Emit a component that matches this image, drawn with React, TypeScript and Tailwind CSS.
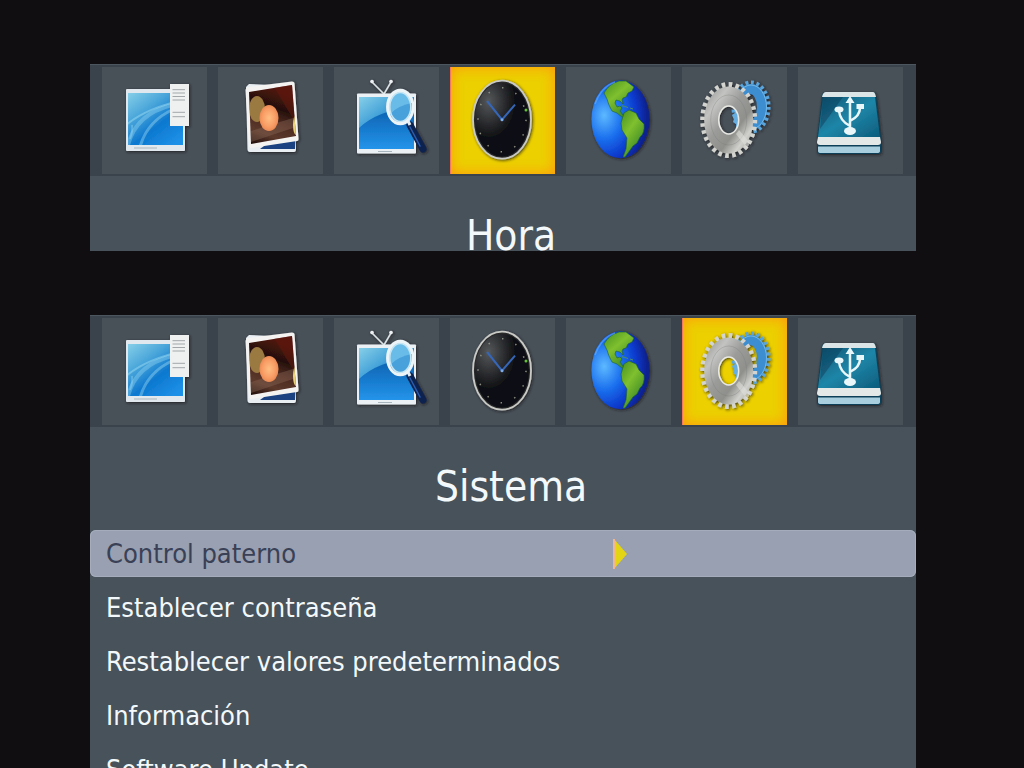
import React from "react";
import clsx from "clsx";

type TabId = "picture" | "photo" | "search" | "time" | "option" | "system" | "usb";

const IconDefs: React.FC = () => (
	<svg className="absolute h-0 w-0" aria-hidden="true">
		<defs>
			<linearGradient id="screen" x1="0" y1="0" x2="0.8" y2="1">
				<stop offset="0" stopColor="#86cfe8" />
				<stop offset="0.35" stopColor="#4aa6da" />
				<stop offset="0.65" stopColor="#0d78cf" />
				<stop offset="1" stopColor="#1d8fe6" />
			</linearGradient>
			<linearGradient id="screenLow" x1="0" y1="0" x2="0" y2="1">
				<stop offset="0" stopColor="#0a5fae" />
				<stop offset="1" stopColor="#2494ea" />
			</linearGradient>
			<linearGradient id="photo" x1="0" y1="1" x2="0.3" y2="0">
				<stop offset="0" stopColor="#1c0a08" />
				<stop offset="0.25" stopColor="#5c392c" />
				<stop offset="0.5" stopColor="#4d2a20" />
				<stop offset="0.72" stopColor="#24100c" />
				<stop offset="1" stopColor="#4f1510" />
			</linearGradient>
			<radialGradient id="glow">
				<stop offset="0" stopColor="#ffbe82" />
				<stop offset="0.7" stopColor="#f89c64" />
				<stop offset="1" stopColor="#e98a55" />
			</radialGradient>
			<radialGradient id="dial" cx="0.25" cy="0.25" r="0.5">
				<stop offset="0" stopColor="#55585a" />
				<stop offset="1" stopColor="#0e0f12" />
			</radialGradient>
			<radialGradient id="sea" cx="0.22" cy="0.45" r="0.75">
				<stop offset="0" stopColor="#5db9ff" />
				<stop offset="0.4" stopColor="#1b70ee" />
				<stop offset="0.75" stopColor="#0b38cb" />
				<stop offset="1" stopColor="#10208a" />
			</radialGradient>
			<linearGradient id="land" x1="0" y1="0" x2="0.7" y2="1">
				<stop offset="0" stopColor="#459024" />
				<stop offset="0.45" stopColor="#7fc02e" />
				<stop offset="1" stopColor="#358226" />
			</linearGradient>
			<linearGradient id="steel" x1="0" y1="0" x2="1" y2="1">
				<stop offset="0" stopColor="#8c8d8c" />
				<stop offset="0.25" stopColor="#c3c4c1" />
				<stop offset="0.45" stopColor="#9b9c99" />
				<stop offset="0.65" stopColor="#8f908c" />
				<stop offset="0.8" stopColor="#d0d0cd" />
				<stop offset="1" stopColor="#969793" />
			</linearGradient>
			<linearGradient id="drive" x1="0" y1="0" x2="1" y2="1">
				<stop offset="0" stopColor="#0f5371" />
				<stop offset="0.5" stopColor="#1f86a8" />
				<stop offset="1" stopColor="#0c5c7c" />
			</linearGradient>
			<filter id="shade" x="-20%" y="-20%" width="140%" height="140%">
				<feDropShadow dx="1" dy="1" stdDeviation="1.5" floodColor="#15181c" floodOpacity="0.8" />
			</filter>
			<clipPath id="screenClip">
				<rect x="26" y="26" width="55" height="52" />
			</clipPath>
			<clipPath id="photoClip">
				<path d="M31 25 74 18 78 69 33 77z" />
			</clipPath>
		</defs>
	</svg>
);

const PictureIcon = () => (
	<g filter="url(#shade)">
		<rect x="24" y="22" width="59" height="62" rx="1" fill="#e2e9ee" />
		<rect x="26" y="26" width="55" height="52" fill="url(#screen)" />
		<g clipPath="url(#screenClip)" fill="none" stroke="#a4e2f6">
			<path d="M24 58Q46 40 86 32" strokeWidth="2" strokeOpacity="0.45" />
			<path d="M26 78Q34 47 70 38" strokeWidth="4" strokeOpacity="0.35" />
			<path d="M38 80Q45 54 72 42" strokeWidth="3" strokeOpacity="0.4" />
			<path d="M28 72Q31 64 30 58" strokeWidth="2" strokeOpacity="0.35" />
		</g>
		<path d="M32 81H55" stroke="#a9b5bd" strokeWidth="1" />
		<rect x="68" y="17" width="19" height="42" fill="#eff1f1" />
		<path d="M70.500 22.700H83M70.500 26H83M70.500 29.500H83M70.500 33H83M70.500 45.300H83M70.500 49.700H83" stroke="#a3a7a9" strokeWidth="1" />
	</g>
);

const PhotoIcon = () => (
	<g filter="url(#shade)">
		<path d="M31 17 74 19 78 82Q78 85 76 85L32 85Q29.500 85 29.500 82L28 20z" fill="#e8eef2" />
		<path d="M50 76 77 71 77 82 42 82z" fill="#1b4381" />
		<path d="M30 20 74 14.500Q76 14.500 76.500 16L80.500 72Q80.500 74 79 74L33 81Q31 81 31 79L27.500 23Q27.500 21 30 20z" fill="#f5f3f1" />
		<path d="M31 25 74 18 78 69 33 77z" fill="url(#photo)" />
		<g clipPath="url(#photoClip)">
			<path d="M55 18 76 15 80 60z" fill="#641a12" opacity="0.55" />
			<path d="M33 64 78 50 78 60 33 75z" fill="#8a6a58" opacity="0.4" />
			<ellipse cx="39" cy="42" rx="8" ry="13" fill="#9b7a42" />
			<ellipse cx="51" cy="51" rx="9.500" ry="13" fill="url(#glow)" />
			<ellipse cx="78" cy="58" rx="3" ry="10" fill="#ead47a" />
		</g>
	</g>
);

const SearchIcon = () => (
	<g filter="url(#shade)">
		<path d="M38 15 50 27 57 15" fill="none" stroke="#dde4e8" strokeWidth="1.500" />
		<circle cx="38" cy="14.500" r="1.800" fill="#eef1f3" />
		<circle cx="57" cy="14.500" r="1.800" fill="#eef1f3" />
		<rect x="23" y="26.500" width="59" height="60" rx="1" fill="#eaf0f4" />
		<rect x="25" y="30" width="55" height="52" fill="url(#screen)" />
		<path d="M25 61Q44 43 80 40V82H25z" fill="url(#screenLow)" />
		<path d="M44 84.500H58" stroke="#a9b5bd" strokeWidth="1" />
		<path d="M76 58 89 82" stroke="#0c2350" strokeWidth="7" strokeLinecap="round" />
		<path d="M76 60 86 79" stroke="#2d5cae" strokeWidth="1.500" strokeLinecap="round" />
		<path d="M73 52 76 58" stroke="#e5edf2" strokeWidth="3" />
		<ellipse cx="66.300" cy="40" rx="12.500" ry="16.500" fill="#6bbce8" stroke="#edf4f8" strokeWidth="3.500" />
		<path d="M56 47Q65 38 78 36 78 53 66 55 58 54 56 47z" fill="#3a95d5" opacity="0.7" />
		<ellipse cx="66.300" cy="40" rx="10.500" ry="14.500" fill="none" stroke="#c6e6f4" strokeWidth="1.500" />
	</g>
);

const TimeIcon = () => (
	<g filter="url(#shade)">
		<ellipse cx="52" cy="52.700" rx="29" ry="39" fill="#2a2b2c" stroke="#c9cac6" strokeWidth="1.800" />
		<ellipse cx="52" cy="52.700" rx="27" ry="37" fill="url(#dial)" />
		<ellipse cx="52" cy="52.700" rx="24" ry="32" fill="none" stroke="#8a8c82" strokeWidth="1.500" pathLength="120" strokeDasharray="1 9" />
		<circle cx="76" cy="43" r="1.500" fill="#63c03c" />
		<path d="M37 34 52 52.700 65 37.700" fill="none" stroke="#3566b8" strokeWidth="2" />
		<circle cx="52" cy="52.700" r="1.500" fill="#7ba9e8" />
	</g>
);

const OptionIcon = () => (
	<g filter="url(#shade)">
		<ellipse cx="54.500" cy="52.300" rx="29" ry="39" fill="url(#sea)" />
		<path
			d="M38 26Q43 17 53 14L60 14 64 17 68 20 66 24 62 26 60 30 57 31 56 33 57 37 54 34 50 33 49 36 51 40 54 39 56 41 54 44 57 48 61 49 61 51 56 50 51 46 46 44 43 38 41 32z"
			fill="url(#land)"
			stroke="#1c5f30"
			strokeWidth="0.600"
		/>
		<path d="M56 38.500 62 40.500M64 41 67 42" stroke="#4c8f60" strokeWidth="1" />
		<path
			d="M58 46 63 43 70 46 73 52 78 57Q79 66 74 70L71 76 67 79 62 86 59 90 57 90 60 82 61 71 56 63 55 56z"
			fill="url(#land)"
			stroke="#1c5f30"
			strokeWidth="0.600"
		/>
		<path d="M29 37Q35 20 49 15" fill="none" stroke="#72b6ff" strokeWidth="1.500" opacity="0.5" />
	</g>
);

const SystemIcon = () => (
	<g filter="url(#shade)">
		<ellipse cx="69" cy="40" rx="17" ry="24" fill="none" stroke="#5aa5dc" strokeWidth="5" pathLength="96" strokeDasharray="2 2" />
		<ellipse cx="69" cy="40" rx="11" ry="18" fill="none" stroke="#3e8ed0" strokeWidth="10" />
		<ellipse cx="69" cy="40" rx="15.500" ry="22" fill="none" stroke="#73b7e5" strokeWidth="1" />
		<path d="M54 42 51 43 53 46 50 48 52 52 51 55 54 57 54 62 57 59V44z" fill="#66aee0" />
		<ellipse cx="46.700" cy="53" rx="25.500" ry="35" fill="none" stroke="#d3d4d0" strokeWidth="6" pathLength="112" strokeDasharray="2 2" />
		<path
			fillRule="evenodd"
			d="M22.200 53a24.500 33.500 0 1 0 49 0a24.500 33.500 0 1 0 -49 0zM36.700 53a10 14 0 1 1 20 0a10 14 0 1 1 -20 0z"
			fill="url(#steel)"
		/>
		<ellipse cx="46.700" cy="53" rx="10" ry="14" fill="none" stroke="#e8e8e4" strokeWidth="1.500" />
		<ellipse cx="46.700" cy="53" rx="18" ry="25" fill="none" stroke="#777875" strokeWidth="0.500" opacity="0.6" />
		<path d="M54 67 65 81 68 76 57 63z" fill="#e1e1de" opacity="0.55" />
	</g>
);

const UsbIcon = () => (
	<g filter="url(#shade)">
		<path d="M28 25H75Q77 25 78 28L83 72 83 84Q83 87 80 87H22Q19 87 19 84V72L24 28Q25 25 28 25z" fill="#104158" />
		<path d="M28 25H75Q77 25 78 30H24Q25 25 28 25z" fill="#dbe5e8" />
		<path d="M25 30H77L82 70H20z" fill="url(#drive)" />
		<path d="M25 30H45L22 62z" fill="#0b3f5c" opacity="0.5" />
		<path d="M20 70H82L83 75Q83 78 80 78H22Q19 78 19 75z" fill="#e4e8e6" />
		<path d="M20 79.500H82V84Q82 86 79 86H23Q20 86 20 84z" fill="#a9cede" />
		<g stroke="#eaf7fa" strokeWidth="2.500" fill="none">
			<path d="M52 64V34M52 59Q42 54 41 44M52 54Q62 49 62 41" />
		</g>
		<g fill="#eaf7fa">
			<path d="M52 29 56.500 36H47.500z" />
			<ellipse cx="41" cy="42.500" rx="4.500" ry="3" />
			<rect x="58.500" y="37" width="7.500" height="5" />
			<ellipse cx="52" cy="64" rx="6" ry="4" />
		</g>
	</g>
);

const tabs: { id: TabId; label: string; icon: React.FC }[] = [
	{ id: "picture", label: "Programa", icon: PictureIcon },
	{ id: "photo", label: "Imagen", icon: PhotoIcon },
	{ id: "search", label: "Búsqueda", icon: SearchIcon },
	{ id: "time", label: "Hora", icon: TimeIcon },
	{ id: "option", label: "Opciones", icon: OptionIcon },
	{ id: "system", label: "Sistema", icon: SystemIcon },
	{ id: "usb", label: "USB", icon: UsbIcon },
];

const TabBar: React.FC<{ active: TabId }> = ({ active }) => (
	<nav className="grid grid-cols-7 gap-[11px] border-t border-[#4c565f] bg-[#3a434b] py-[2px] pr-[13px] pl-3">
		{tabs.map(({ id, label, icon: Icon }) => (
			<button
				key={id}
				type="button"
				aria-label={label}
				aria-current={id === active ? "page" : undefined}
				className={clsx(
					"flex h-[107px] items-center justify-center",
					id === active
						? "bg-[#ecd000] shadow-[inset_1px_0_0_#f5785a,inset_0_0_14px_#ff9410]"
						: "bg-[#485058]"
				)}
			>
				<svg viewBox="0 0 105 107" className="h-[107px] w-[105px] shrink-0" aria-hidden="true">
					<Icon />
				</svg>
			</button>
		))}
	</nav>
);

const systemItems = [
	"Control paterno",
	"Establecer contraseña",
	"Restablecer valores predeterminados",
	"Información",
	"Software Update",
];

const App: React.FC = () => {
	return (
		<div className="flex h-screen flex-col overflow-hidden bg-[#100e11] pt-16 pr-[108px] pl-[90px] font-['DejaVu_Sans_Condensed','DejaVu_Sans',sans-serif] text-[#f3f8fa]">
			<IconDefs />

			{/* Time menu */}
			<section className="shrink-0 bg-[#47525a]">
				<TabBar active="time" />
				<div className="h-[75px] overflow-hidden pt-8 pl-4 text-center">
					<h2 className="text-[42px] leading-[56px]">Hora</h2>
				</div>
			</section>

			{/* System menu */}
			<section className="mt-16 shrink-0 bg-[#47525a]">
				<TabBar active="system" />
				<h2 className="pt-8 pb-[15px] pl-4 text-center text-[42px] leading-[56px]">Sistema</h2>
				<ul className="flex flex-col gap-[7px]">
					{systemItems.map((item, index) => (
						<li key={item}>
							<button
								type="button"
								className={clsx(
									"flex h-[47px] w-full items-center rounded-md px-4 text-left text-[27px] leading-8",
									index === 0 && "bg-[#98a0b1] text-[#3a4055] shadow-[inset_0_0_0_1px_#a5adbc]"
								)}
							>
								<span className="w-[507px]">{item}</span>
								{index === 0 && (
									<svg viewBox="0 0 14 32" className="h-8 w-[14px]" aria-hidden="true">
										<path d="M1 1 14 16 1 31z" fill="#e3d414" />
										<path d="M1 1V31" stroke="#f3b58c" strokeWidth="2" />
									</svg>
								)}
							</button>
						</li>
					))}
				</ul>
			</section>
		</div>
	);
};

export default App;
